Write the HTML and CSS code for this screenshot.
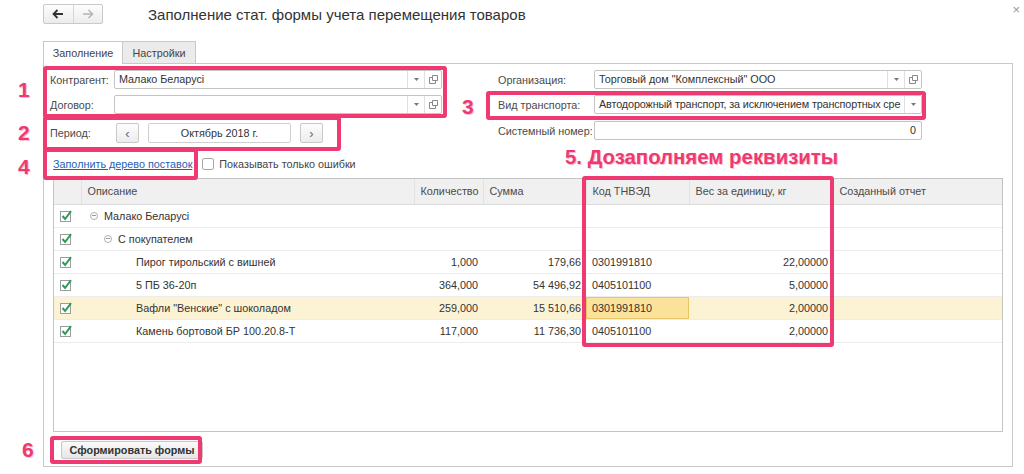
FILE: index.html
```html
<!DOCTYPE html>
<html lang="ru">
<head>
<meta charset="utf-8">
<title>Заполнение стат. формы</title>
<link rel="stylesheet" href="styles.css">
</head>
<body>
<div class="page">
  <header class="topbar">
    <div class="nav">
      <span class="nav-btn"><svg width="12" height="10" viewBox="0 0 12 10"><path d="M11 5H2M5.5 1L1.5 5l4 4" fill="none" stroke="#333" stroke-width="1.8"/></svg></span>
      <span class="nav-btn"><svg width="12" height="10" viewBox="0 0 12 10"><path d="M1 5h9M6.5 1l4 4-4 4" fill="none" stroke="#b5b5b5" stroke-width="1.5"/></svg></span>
    </div>
    <h1 class="title">Заполнение стат. формы учета перемещения товаров</h1>
    <span class="close">×</span>
  </header>

  <div class="tabs">
    <div class="tab active">Заполнение</div>
    <div class="tab">Настройки</div>
  </div>

  <section class="panel">
    <div class="form">
      <div class="col col-left">
        <div class="field">
          <span class="label">Контрагент:</span>
          <div class="input"><span class="value">Малако Беларусі</span><span class="dd"><svg width="5" height="3" viewBox="0 0 5 3"><path d="M0 0h5L2.5 3z" fill="#777"/></svg></span><span class="open"><svg width="9" height="9" viewBox="0 0 9 9"><path d="M3.5 .5h5v5h-5z M3.5 2.5h-3v6h6v-3" fill="none" stroke="#888"/></svg></span></div>
        </div>
        <div class="field">
          <span class="label">Договор:</span>
          <div class="input"><span class="value"></span><span class="dd"><svg width="5" height="3" viewBox="0 0 5 3"><path d="M0 0h5L2.5 3z" fill="#777"/></svg></span><span class="open"><svg width="9" height="9" viewBox="0 0 9 9"><path d="M3.5 .5h5v5h-5z M3.5 2.5h-3v6h6v-3" fill="none" stroke="#888"/></svg></span></div>
        </div>
        <div class="field period">
          <span class="label">Период:</span>
          <span class="pbtn">‹</span>
          <span class="month">Октябрь 2018 г.</span>
          <span class="pbtn">›</span>
        </div>
      </div>
      <div class="col col-right">
        <div class="field">
          <span class="label wide">Организация:</span>
          <div class="input"><span class="value">Торговый дом "Комплексный" ООО</span><span class="dd"><svg width="5" height="3" viewBox="0 0 5 3"><path d="M0 0h5L2.5 3z" fill="#777"/></svg></span><span class="open"><svg width="9" height="9" viewBox="0 0 9 9"><path d="M3.5 .5h5v5h-5z M3.5 2.5h-3v6h6v-3" fill="none" stroke="#888"/></svg></span></div>
        </div>
        <div class="field">
          <span class="label wide">Вид транспорта:</span>
          <div class="input"><span class="value tight">Автодорожный транспорт, за исключением транспортных сре</span><span class="dd"><svg width="5" height="3" viewBox="0 0 5 3"><path d="M0 0h5L2.5 3z" fill="#777"/></svg></span></div>
        </div>
        <div class="field f3">
          <span class="label wide">Системный номер:</span>
          <div class="input numeric"><span class="value">0</span></div>
        </div>
      </div>
    </div>

    <div class="linkrow">
      <a class="link" href="#">Заполнить дерево поставок</a>
      <span class="cbox"></span>
      <span class="cblabel">Показывать только ошибки</span>
    </div>

    <div class="grid">
      <table class="tbl">
        <colgroup>
          <col class="c-chk"><col class="c-desc"><col class="c-qty"><col class="c-sum"><col class="c-code"><col class="c-w"><col>
        </colgroup>
        <thead>
          <tr><th></th><th>Описание</th><th>Количество</th><th>Сумма</th><th>Код ТНВЭД</th><th>Вес за единицу, кг</th><th>Созданный отчет</th></tr>
        </thead>
        <tbody>
          <tr><td class="chk"><svg width="14" height="14" viewBox="0 0 14 14"><rect x="1.5" y="2.5" width="10" height="10" fill="#fff" stroke="#9c9c9c"/><path d="M3.5 7l2.6 3L12 2.2" fill="none" stroke="#2f9a55" stroke-width="2"/></svg></td><td class="l1"><span class="tree"></span>Малако Беларусі</td><td></td><td></td><td></td><td></td><td></td></tr>
          <tr><td class="chk"><svg width="14" height="14" viewBox="0 0 14 14"><rect x="1.5" y="2.5" width="10" height="10" fill="#fff" stroke="#9c9c9c"/><path d="M3.5 7l2.6 3L12 2.2" fill="none" stroke="#2f9a55" stroke-width="2"/></svg></td><td class="l2"><span class="tree"></span>С покупателем</td><td></td><td></td><td></td><td></td><td></td></tr>
          <tr><td class="chk"><svg width="14" height="14" viewBox="0 0 14 14"><rect x="1.5" y="2.5" width="10" height="10" fill="#fff" stroke="#9c9c9c"/><path d="M3.5 7l2.6 3L12 2.2" fill="none" stroke="#2f9a55" stroke-width="2"/></svg></td><td class="l3">Пирог тирольский с вишней</td><td class="r">1,000</td><td class="r">179,66</td><td>0301991810</td><td class="r">22,00000</td><td></td></tr>
          <tr><td class="chk"><svg width="14" height="14" viewBox="0 0 14 14"><rect x="1.5" y="2.5" width="10" height="10" fill="#fff" stroke="#9c9c9c"/><path d="M3.5 7l2.6 3L12 2.2" fill="none" stroke="#2f9a55" stroke-width="2"/></svg></td><td class="l3">5 ПБ 36-20п</td><td class="r">364,000</td><td class="r">54 496,92</td><td>0405101100</td><td class="r">5,00000</td><td></td></tr>
          <tr class="sel"><td class="chk"><svg width="14" height="14" viewBox="0 0 14 14"><rect x="1.5" y="2.5" width="10" height="10" fill="#fff" stroke="#9c9c9c"/><path d="M3.5 7l2.6 3L12 2.2" fill="none" stroke="#2f9a55" stroke-width="2"/></svg></td><td class="l3">Вафли "Венские" с шоколадом</td><td class="r">259,000</td><td class="r">15 510,66</td><td class="cur">0301991810</td><td class="r">2,00000</td><td></td></tr>
          <tr><td class="chk"><svg width="14" height="14" viewBox="0 0 14 14"><rect x="1.5" y="2.5" width="10" height="10" fill="#fff" stroke="#9c9c9c"/><path d="M3.5 7l2.6 3L12 2.2" fill="none" stroke="#2f9a55" stroke-width="2"/></svg></td><td class="l3">Камень бортовой БР 100.20.8-Т</td><td class="r">117,000</td><td class="r">11 736,30</td><td>0405101100</td><td class="r">2,00000</td><td></td></tr>
        </tbody>
      </table>
    </div>

    <div class="actions">
      <span class="btn">Сформировать формы</span>
    </div>
  </section>

  <div class="mark b1"></div>
  <div class="mark b2"></div>
  <div class="mark b4"></div>
  <div class="mark b3"></div>
  <div class="mark b5"></div>
  <div class="mark b6"></div>
  <span class="anno n1">1</span>
  <span class="anno n2">2</span>
  <span class="anno n3">3</span>
  <span class="anno n4">4</span>
  <span class="anno n6">6</span>
  <span class="note">5. Дозаполняем реквизиты</span>
</div>
</body>
</html>
```

FILE: styles.css
```css
* { box-sizing: border-box; }
html, body { margin: 0; padding: 0; background: #fff; }
body {
  font-family: "Liberation Sans", Arial, sans-serif;
  font-size: 10.8px;
  color: #333;
}
.page { position: relative; width: 1024px; height: 474px; overflow: hidden; }

/* top bar */
.topbar { display: flex; align-items: center; height: 28px; padding-left: 43px; }
.nav {
  display: flex; width: 60px; height: 20px;
  border: 1px solid #c9c9c9; border-radius: 2px;
  background: linear-gradient(#fdfdfd, #ececec);
}
.nav-btn { flex: 1; display: flex; align-items: center; justify-content: center; }
.nav-btn + .nav-btn { border-left: 1px solid #d6d6d6; }
.title {
  margin: 0 0 0 45px; font-size: 15px; font-weight: normal; color: #333;
}
.close { margin-left: auto; margin-right: 4px; margin-top: -9px; color: #9a9a9a; font-size: 13px; }

/* tabs */
.tabs { display: flex; margin: 13px 0 0 43px; height: 22px; }
.tab {
  display: flex; align-items: center; justify-content: center;
  border: 1px solid #c8c8c8; border-bottom: none; color: #444;
  background: #ebebeb; height: 22px;
}
.tab.active { width: 80px; background: #fff; position: relative; z-index: 1; height: 23px; }
.tab + .tab { width: 73px; border-left: none; }

/* panel */
.panel {
  margin-left: 43px; width: 970px; height: 404px;
  border: 1px solid #c8c8c8; padding: 6px 0 0 6px;
}
.form { display: flex; }
.col { display: flex; flex-direction: column; }
.col-left { width: 392px; }
.col-right { margin-left: 56px; width: 424px; }
.field { display: flex; align-items: center; height: 19px; }
.field + .field { margin-top: 6px; }
.col-right .f3 { margin-top: 7px; }
.label { width: 64px; color: #4a4a4a; white-space: nowrap; }
.label.wide { width: 96px; }
.input {
  display: flex; width: 328px; height: 19px;
  border: 1px solid #c4c4c4; border-radius: 2px; background: #fff;
}
.input .value { flex: 1; padding: 0 4px; line-height: 17px; white-space: nowrap; overflow: hidden; color: #333; }
.input .value.tight { letter-spacing: -0.12px; padding-right: 2px; }
.input.numeric .value { text-align: right; padding-right: 5px; }
.dd, .open {
  width: 17px; display: flex; align-items: center; justify-content: center;
  border-left: 1px solid #e0e0e0;
}
.period { height: 20px; margin-top: 9px !important; }
.pbtn {
  width: 23px; height: 20px; margin-left: 2px;
  display: flex; align-items: center; justify-content: center;
  border: 1px solid #c8c8c8; border-radius: 2px;
  background: linear-gradient(#fdfdfd, #ececec); color: #666; font-size: 13px;
}
.month {
  width: 143px; height: 20px; margin: 0 7px 0 9px;
  border: 1px solid #d0d0d0; border-radius: 2px;
  display: flex; align-items: center; justify-content: center; color: #333;
}

/* link row */
.linkrow { display: flex; align-items: center; height: 14px; margin: 14px 0 0 3px; }
.link { color: #1f5fb4; text-decoration: underline; }
.cbox { width: 12px; height: 12px; border: 1px solid #a8a8a8; border-radius: 2px; margin-left: 10px; background: #fff; }
.cblabel { margin-left: 5px; color: #444; }

/* table */
.grid {
  margin: 7px 0 0 3px; width: 950px; height: 254px;
  border: 1px solid #c4c4c4; overflow: hidden;
}
.tbl { border-collapse: collapse; table-layout: fixed; width: 948px; }
.c-chk { width: 27px; }
.c-desc { width: 333px; }
.c-qty { width: 69px; }
.c-sum { width: 103px; }
.c-code { width: 103px; }
.c-w { width: 144px; }
.tbl th {
  height: 25px; background: #f0f0f0; font-weight: normal; color: #4a4a4a;
  text-align: left; padding: 0 6px; border-left: 1px solid #e2e2e2;
  border-bottom: 1px solid #dcdcdc; white-space: nowrap;
}
.tbl th:first-child { border-left: none; }
.tbl td {
  height: 23px; padding: 0 6px; border-bottom: 1px solid #ececec;
  white-space: nowrap; overflow: hidden; color: #333;
}
.tbl td.chk { padding: 0 0 0 5px; }
.tbl td.chk svg { display: block; }
.tbl td.r { text-align: right; padding-right: 5px; }
.tbl td.l1 { padding-left: 9px; }
.tbl td.l2 { padding-left: 23px; }
.tbl td.l3 { padding-left: 55px; }
.tree {
  display: inline-block; width: 8px; height: 8px; margin-right: 6px;
  border: 1px solid #b0b0b0; border-radius: 50%; position: relative;
}
.tree::after {
  content: ""; position: absolute; left: 1px; right: 1px; top: 2.5px; height: 1px; background: #999;
}
.tbl tr.sel td { background: #fcf3d5; }
.tbl tr.sel td.cur { background: #fbe29a; box-shadow: inset 0 0 0 1px #e9c567; }

/* actions */
.actions { display: flex; margin: 9px 0 0 11px; }
.btn {
  display: flex; align-items: center; justify-content: center;
  width: 142px; height: 18px; font-weight: bold; color: #333;
  border: 1px solid #c8c8c8; border-radius: 2px;
  background: linear-gradient(#fafafa, #e6e6e6);
}

/* annotations */
.mark { position: absolute; border: 4px solid #ee3a70; border-radius: 3px; }
.b1 { left: 43px; top: 66px; width: 404px; height: 52px; }
.b2 { left: 43px; top: 116px; width: 298px; height: 35px; }
.b4 { left: 43px; top: 148px; width: 155px; height: 32px; }
.b3 { left: 486px; top: 91px; width: 440px; height: 29px; }
.b5 { left: 582px; top: 176px; width: 252px; height: 171px; }
.b6 { left: 50px; top: 436px; width: 152px; height: 28px; }
.anno {
  position: absolute; font-weight: bold; font-size: 21px; color: #ee3a70;
  text-shadow: 1px 1px 0 #f9c2d3;
}
.n1 { left: 18px; top: 78px; }
.n2 { left: 18px; top: 121px; }
.n3 { left: 462px; top: 95px; }
.n4 { left: 18px; top: 155px; }
.n6 { left: 22px; top: 438px; }
.note {
  position: absolute; left: 565px; top: 146px;
  font-weight: bold; font-size: 20.4px; color: #ee3a70;
  text-shadow: 1px 1px 0 #f9c2d3;
}
```
